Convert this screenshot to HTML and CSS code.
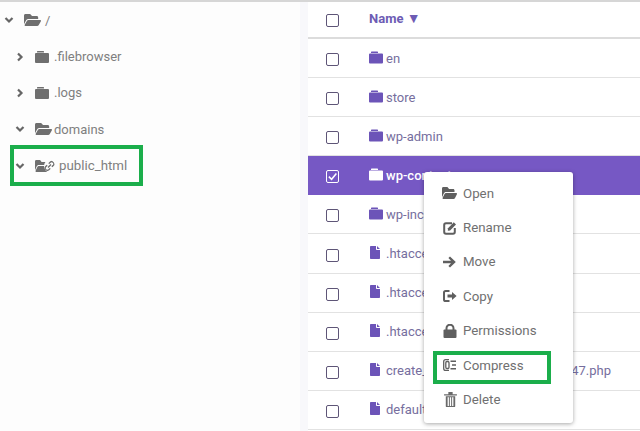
FILE: index.html
```html
<!DOCTYPE html>
<html lang="en">
<head>
<meta charset="utf-8">
<title>File manager</title>
<link rel="stylesheet" href="styles.css">
</head>
<body>
<svg class="defs" width="0" height="0" aria-hidden="true">
  <symbol id="i-open" viewBox="0 64 576 384" preserveAspectRatio="none"><path d="M572.694 292.093L500.27 416.248A63.997 63.997 0 0 1 444.989 448H45.025c-18.523 0-30.064-20.093-20.731-36.093l72.424-124.155A64 64 0 0 1 152 256h399.964c18.523 0 30.064 20.093 20.73 36.093zM152 224h328v-48c0-26.51-21.49-48-48-48H272l-64-64H48C21.49 64 0 85.49 0 112v278.046l69.077-118.418C86.214 242.25 117.989 224 152 224z"/></symbol>
  <symbol id="i-folder" viewBox="0 0 14 12"><path d="M2 0.4Q2 0 2.5 0H8.5Q9 0 9 .4V1.6H2ZM0 3Q0 2.1 1 2.1H13Q14 2.1 14 3V11Q14 12 13 12H1Q0 12 0 11Z"/></symbol>
  <symbol id="i-file" viewBox="0 0 10 13"><path d="M0 .8Q0 0 .8 0H6V3.2Q6 4 6.8 4H10V12.2Q10 13 9.2 13H.8Q0 13 0 12.2ZM7 0 10 3H7Z"/></symbol>
  <symbol id="i-chev-d" viewBox="0 0 10 10"><path d="M1.5 3 5 6.5 8.5 3" fill="none" stroke="currentColor" stroke-width="2.2"/></symbol>
  <symbol id="i-chev-r" viewBox="0 0 10 10"><path d="M3 1.5 6.5 5 3 8.5" fill="none" stroke="currentColor" stroke-width="2.2"/></symbol>
  <symbol id="i-edit" viewBox="0 0 14 14"><path d="M9 2.2H3Q1.2 2.2 1.2 4V11Q1.2 12.8 3 12.8H10Q11.8 12.8 11.8 11V7" fill="none" stroke="currentColor" stroke-width="2"/><path d="M5 7.2 10.8 1.2 13 3.4 7.1 9.4 4.8 9.7Z"/></symbol>
  <symbol id="i-move" viewBox="0 0 14 12"><path d="M0 4.8H8L5.4 2 7 .4 12.8 6 7 11.6 5.4 10 8 7.2H0Z"/></symbol>
  <symbol id="i-copy" viewBox="0 0 14 13"><path d="M6.5 1.5H2.6Q1 1.5 1 3.1V9.9Q1 11.5 2.6 11.5H6.5" fill="none" stroke="currentColor" stroke-width="2"/><path d="M4.5 5H9V2.4L13.6 6.5 9 10.6V8H4.5Z"/></symbol>
  <symbol id="i-lock" viewBox="0 0 13 14"><path d="M3 6V4.2A3.5 3.5 0 0 1 10 4.2V6" fill="none" stroke="currentColor" stroke-width="2"/><rect y="5.6" width="13" height="8.4" rx="1"/></symbol>
  <symbol id="i-zip" viewBox="0 0 14 13"><path d="M6 1.2H2.6Q.7 1.2.7 3.1V9.9Q.7 11.8 2.6 11.8H6" fill="none" stroke="currentColor" stroke-width="1.3"/><rect x="2.8" y="3" width="3.2" height="7" rx="1.2" fill="none" stroke="currentColor" stroke-width="1.3"/><path d="M7.5 2H13V3.5H7.5ZM9 5.7H13V7.2H9ZM7.5 9.5H13V11H7.5Z"/></symbol>
  <symbol id="i-trash" viewBox="0 0 12 14"><path d="M0 2H12V3.2H0ZM4 0H8V2H4Z"/><path d="M1.6 4H10.4V13.2Q10.4 14 9.6 14H2.4Q1.6 14 1.6 13.2ZM3.3 5V13H4.5V5ZM5.4 5V13H6.6V5ZM7.5 5V13H8.7V5Z" fill-rule="evenodd"/></symbol>
  <symbol id="i-link" viewBox="0 0 12 12"><path d="M5.2 3.4 6.8 1.8Q8.3.5 9.8 1.8L10.3 2.3Q11.5 3.8 10.2 5.2L8.6 6.8M6.8 8.6 5.2 10.2Q3.7 11.5 2.2 10.2L1.7 9.7Q.5 8.2 1.8 6.8L3.4 5.2M4.4 7.6 7.6 4.4" fill="none" stroke="currentColor" stroke-width="1.5"/></symbol>
</svg>

<main class="manager">
  <nav class="tree">
    <div class="tree-row level-0">
      <svg class="chev"><use href="#i-chev-d"/></svg>
      <svg class="ico-open"><use href="#i-open"/></svg>
      <span class="slash">/</span>
    </div>
    <div class="tree-row level-1">
      <svg class="chev"><use href="#i-chev-r"/></svg>
      <svg class="ico-folder"><use href="#i-folder"/></svg>
      <span>.filebrowser</span>
    </div>
    <div class="tree-row level-1">
      <svg class="chev"><use href="#i-chev-r"/></svg>
      <svg class="ico-folder"><use href="#i-folder"/></svg>
      <span>.logs</span>
    </div>
    <div class="tree-row level-1">
      <svg class="chev"><use href="#i-chev-d"/></svg>
      <svg class="ico-open"><use href="#i-open"/></svg>
      <span>domains</span>
    </div>
    <div class="tree-row level-1">
      <svg class="chev"><use href="#i-chev-d"/></svg>
      <span class="linked">
        <svg class="ico-open"><use href="#i-open"/></svg>
        <svg class="ico-link"><use href="#i-link"/></svg>
      </span>
      <span class="public">public_html</span>
    </div>
  </nav>

  <section class="files">
    <div class="file-row head">
      <span class="check"></span>
      <span class="head-name">Name <span class="sort">▼</span></span>
    </div>
    <div class="file-row">
      <span class="check"></span>
      <svg class="ico-folder"><use href="#i-folder"/></svg>
      <span>en</span>
    </div>
    <div class="file-row">
      <span class="check"></span>
      <svg class="ico-folder"><use href="#i-folder"/></svg>
      <span>store</span>
    </div>
    <div class="file-row">
      <span class="check"></span>
      <svg class="ico-folder"><use href="#i-folder"/></svg>
      <span>wp-admin</span>
    </div>
    <div class="file-row selected">
      <span class="check checked"><svg viewBox="0 0 12 12"><path d="M2 6.2 5 9 10.2 2.8" fill="none" stroke="#fff" stroke-width="1.7"/></svg></span>
      <svg class="ico-folder"><use href="#i-folder"/></svg>
      <span>wp-content</span>
    </div>
    <div class="file-row">
      <span class="check"></span>
      <svg class="ico-folder"><use href="#i-folder"/></svg>
      <span>wp-includes</span>
    </div>
    <div class="file-row">
      <span class="check"></span>
      <svg class="ico-file"><use href="#i-file"/></svg>
      <span>.htaccess</span>
    </div>
    <div class="file-row">
      <span class="check"></span>
      <svg class="ico-file"><use href="#i-file"/></svg>
      <span>.htaccess</span>
    </div>
    <div class="file-row">
      <span class="check"></span>
      <svg class="ico-file"><use href="#i-file"/></svg>
      <span>.htaccess</span>
    </div>
    <div class="file-row">
      <span class="check"></span>
      <svg class="ico-file"><use href="#i-file"/></svg>
      <span class="create">create_<span class="create-end">47.php</span></span>
    </div>
    <div class="file-row">
      <span class="check"></span>
      <svg class="ico-file"><use href="#i-file"/></svg>
      <span>default</span>
    </div>
  </section>
</main>

<ul class="menu">
  <li><svg class="m-open"><use href="#i-open"/></svg>Open</li>
  <li><svg class="m-ico"><use href="#i-edit"/></svg>Rename</li>
  <li><svg class="m-ico"><use href="#i-move"/></svg>Move</li>
  <li><svg class="m-ico"><use href="#i-copy"/></svg>Copy</li>
  <li><svg class="m-ico"><use href="#i-lock"/></svg>Permissions</li>
  <li><svg class="m-ico"><use href="#i-zip"/></svg>Compress</li>
  <li><svg class="m-trash"><use href="#i-trash"/></svg>Delete</li>
</ul>

<div class="mark mark-tree"></div>
<div class="mark mark-menu"></div>
</body>
</html>
```
FILE: styles.css
```css
* { box-sizing: border-box; }
html, body { margin: 0; height: 100%; }
body {
  width: 640px;
  height: 431px;
  overflow: hidden;
  position: relative;
  background: #fff;
  font-family: Roboto, "Liberation Sans", sans-serif;
  font-size: 13px;
  color: #777;
  border-top: 2px solid #d6d6d6;
}
.defs { position: absolute; }
svg { fill: currentColor; display: block; flex: none; }

.manager { display: flex; height: 429px; }

.tree {
  width: 308px;
  flex: none;
  background: #fdfdfd;
  border-right: 8px solid #f8f8fb;
}
.tree-row {
  display: flex;
  align-items: center;
  height: 36.4px;
  color: #7f7f7f;
}
.level-0 { padding-left: 4px; }
.level-1 { padding-left: 15px; }
.chev { width: 10px; height: 10px; margin-right: 10px; color: #666; }
.tree .ico-open { width: 17px; height: 12px; color: #6f6f6f; margin-right: 2px; }
.tree .ico-folder { width: 14px; height: 12px; color: #6f6f6f; margin-right: 5px; }
.slash { margin-left: 2px; }
.linked { display: flex; align-items: center; margin-right: 4px; }
.tree .linked .ico-open { width: 14px; margin-right: 0; }
.ico-link { width: 11px; height: 12px; margin-left: -5px; color: #6f6f6f; background: #fdfdfd; border-radius: 50%; }
.public { font-size: 13.3px; }

.files { flex: 1; min-width: 0; }
.file-row {
  display: flex;
  align-items: center;
  height: 39.1px;
  padding-left: 18px;
  border-bottom: 1px solid #e2e2e2;
  color: #766e9e;
}
.file-row .check { margin-right: 30px; margin-top: 3px; }
.head { height: 37px; border-bottom: 2px solid #dcdcdc; }
.head .check { margin-top: 2px; }
.head-name { color: #6d5cb4; font-weight: 700; font-size: 13px; margin-top: -3px; }
.sort { font-size: 14px; }
.check {
  width: 13px;
  height: 13px;
  flex: none;
  border: 1.5px solid #5e5577;
  border-radius: 2px;
  background: #fff;
}
.file-row .ico-folder { width: 14px; height: 13px; color: #6c54b8; margin-right: 3px; margin-top: -2px; }
.file-row .ico-file { width: 10px; height: 13px; color: #6c54b8; margin-left: 1px; margin-right: 6px; margin-top: -2px; }
.selected { background: #7658c4; color: #fff; border-bottom-color: #7658c4; font-weight: 500; }
.selected .ico-folder { color: #fff; }
.selected .check { background: transparent; border-color: #fff; }
.check svg { width: 100%; height: 100%; fill: none; }
.create { display: flex; width: 225px; justify-content: space-between; }
.create-end { display: block; }

.menu {
  position: absolute;
  left: 424px;
  top: 170px;
  width: 149px;
  height: 251px;
  margin: 0;
  padding: 4px 0 0;
  list-style: none;
  background: #fff;
  border-radius: 3px;
  box-shadow: 0 1px 4px rgba(0, 0, 0, .35);
  color: #707070;
}
.menu li {
  display: flex;
  align-items: center;
  height: 34.4px;
  padding-left: 18px;
  font-size: 13.3px;
}
.menu .m-open { width: 15px; height: 12px; margin-right: 6px; color: #5f5f5f; }
.menu .m-ico { width: 14px; height: 14px; margin-left: 1px; margin-right: 6px; color: #5f5f5f; }
.menu .m-trash { width: 13px; height: 15px; margin-left: 2px; margin-right: 6px; color: #6a6a6a; }

.mark { position: absolute; border: 4px solid #1bae4b; }
.mark-tree { left: 10px; top: 143px; width: 133px; height: 41px; }
.mark-menu { left: 433px; top: 349px; width: 118px; height: 33px; }
```
